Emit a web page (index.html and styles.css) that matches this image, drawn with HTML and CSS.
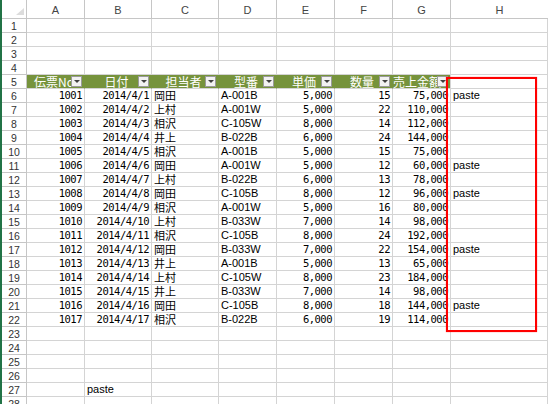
FILE: index.html
```html
<!DOCTYPE html>
<html lang="ja">
<head>
<meta charset="utf-8">
<link rel="stylesheet" href="styles.css">
</head>
<body>
<div class="sheet">
  <div class="row hdr">
    <div class="c corner"><svg width="8" height="7" viewBox="0 0 8 7"><polygon points="8,0 8,7 0,7" fill="#dcdcdc"/></svg></div>
    <div class="c col">A</div><div class="c col">B</div><div class="c col">C</div><div class="c col">D</div>
    <div class="c col">E</div><div class="c col">F</div><div class="c col">G</div><div class="c col">H</div>
  </div>
  <div class="row"><div class="c rh">1</div><div class="c"></div><div class="c"></div><div class="c"></div><div class="c"></div><div class="c"></div><div class="c"></div><div class="c"></div><div class="c"></div></div>
  <div class="row"><div class="c rh">2</div><div class="c"></div><div class="c"></div><div class="c"></div><div class="c"></div><div class="c"></div><div class="c"></div><div class="c"></div><div class="c"></div></div>
  <div class="row"><div class="c rh">3</div><div class="c"></div><div class="c"></div><div class="c"></div><div class="c"></div><div class="c"></div><div class="c"></div><div class="c"></div><div class="c"></div></div>
  <div class="row"><div class="c rh">4</div><div class="c"></div><div class="c"></div><div class="c"></div><div class="c"></div><div class="c"></div><div class="c"></div><div class="c"></div><div class="c"></div></div>
  <div class="row">
    <div class="c rh">5</div>
    <div class="c th">伝票No<span class="fb"></span></div>
    <div class="c th">日付<span class="fb"></span></div>
    <div class="c th">担当者<span class="fb"></span></div>
    <div class="c th">型番<span class="fb"></span></div>
    <div class="c th">単価<span class="fb"></span></div>
    <div class="c th">数量<span class="fb"></span></div>
    <div class="c th th-last">売上金額<span class="fb"></span></div>
    <div class="c"></div>
  </div>
  <div class="row"><div class="c rh">6</div><div class="c n">1001</div><div class="c n">2014/4/1</div><div class="c j">岡田</div><div class="c t">A-001B</div><div class="c n">5,000</div><div class="c n">15</div><div class="c n">75,000</div><div class="c t">paste</div></div>
  <div class="row"><div class="c rh">7</div><div class="c n">1002</div><div class="c n">2014/4/2</div><div class="c j">上村</div><div class="c t">A-001W</div><div class="c n">5,000</div><div class="c n">22</div><div class="c n">110,000</div><div class="c"></div></div>
  <div class="row"><div class="c rh">8</div><div class="c n">1003</div><div class="c n">2014/4/3</div><div class="c j">相沢</div><div class="c t">C-105W</div><div class="c n">8,000</div><div class="c n">14</div><div class="c n">112,000</div><div class="c"></div></div>
  <div class="row"><div class="c rh">9</div><div class="c n">1004</div><div class="c n">2014/4/4</div><div class="c j">井上</div><div class="c t">B-022B</div><div class="c n">6,000</div><div class="c n">24</div><div class="c n">144,000</div><div class="c"></div></div>
  <div class="row"><div class="c rh">10</div><div class="c n">1005</div><div class="c n">2014/4/5</div><div class="c j">相沢</div><div class="c t">A-001B</div><div class="c n">5,000</div><div class="c n">15</div><div class="c n">75,000</div><div class="c"></div></div>
  <div class="row"><div class="c rh">11</div><div class="c n">1006</div><div class="c n">2014/4/6</div><div class="c j">岡田</div><div class="c t">A-001W</div><div class="c n">5,000</div><div class="c n">12</div><div class="c n">60,000</div><div class="c t">paste</div></div>
  <div class="row"><div class="c rh">12</div><div class="c n">1007</div><div class="c n">2014/4/7</div><div class="c j">上村</div><div class="c t">B-022B</div><div class="c n">6,000</div><div class="c n">13</div><div class="c n">78,000</div><div class="c"></div></div>
  <div class="row"><div class="c rh">13</div><div class="c n">1008</div><div class="c n">2014/4/8</div><div class="c j">岡田</div><div class="c t">C-105B</div><div class="c n">8,000</div><div class="c n">12</div><div class="c n">96,000</div><div class="c t">paste</div></div>
  <div class="row"><div class="c rh">14</div><div class="c n">1009</div><div class="c n">2014/4/9</div><div class="c j">相沢</div><div class="c t">A-001W</div><div class="c n">5,000</div><div class="c n">16</div><div class="c n">80,000</div><div class="c"></div></div>
  <div class="row"><div class="c rh">15</div><div class="c n">1010</div><div class="c n">2014/4/10</div><div class="c j">上村</div><div class="c t">B-033W</div><div class="c n">7,000</div><div class="c n">14</div><div class="c n">98,000</div><div class="c"></div></div>
  <div class="row"><div class="c rh">16</div><div class="c n">1011</div><div class="c n">2014/4/11</div><div class="c j">相沢</div><div class="c t">C-105B</div><div class="c n">8,000</div><div class="c n">24</div><div class="c n">192,000</div><div class="c"></div></div>
  <div class="row"><div class="c rh">17</div><div class="c n">1012</div><div class="c n">2014/4/12</div><div class="c j">岡田</div><div class="c t">B-033W</div><div class="c n">7,000</div><div class="c n">22</div><div class="c n">154,000</div><div class="c t">paste</div></div>
  <div class="row"><div class="c rh">18</div><div class="c n">1013</div><div class="c n">2014/4/13</div><div class="c j">井上</div><div class="c t">A-001B</div><div class="c n">5,000</div><div class="c n">13</div><div class="c n">65,000</div><div class="c"></div></div>
  <div class="row"><div class="c rh">19</div><div class="c n">1014</div><div class="c n">2014/4/14</div><div class="c j">上村</div><div class="c t">C-105W</div><div class="c n">8,000</div><div class="c n">23</div><div class="c n">184,000</div><div class="c"></div></div>
  <div class="row"><div class="c rh">20</div><div class="c n">1015</div><div class="c n">2014/4/15</div><div class="c j">井上</div><div class="c t">B-033W</div><div class="c n">7,000</div><div class="c n">14</div><div class="c n">98,000</div><div class="c"></div></div>
  <div class="row"><div class="c rh">21</div><div class="c n">1016</div><div class="c n">2014/4/16</div><div class="c j">岡田</div><div class="c t">C-105B</div><div class="c n">8,000</div><div class="c n">18</div><div class="c n">144,000</div><div class="c t">paste</div></div>
  <div class="row"><div class="c rh">22</div><div class="c n">1017</div><div class="c n">2014/4/17</div><div class="c j">相沢</div><div class="c t">B-022B</div><div class="c n">6,000</div><div class="c n">19</div><div class="c n">114,000</div><div class="c"></div></div>
  <div class="row"><div class="c rh">23</div><div class="c"></div><div class="c"></div><div class="c"></div><div class="c"></div><div class="c"></div><div class="c"></div><div class="c"></div><div class="c"></div></div>
  <div class="row"><div class="c rh">24</div><div class="c"></div><div class="c"></div><div class="c"></div><div class="c"></div><div class="c"></div><div class="c"></div><div class="c"></div><div class="c"></div></div>
  <div class="row"><div class="c rh">25</div><div class="c"></div><div class="c"></div><div class="c"></div><div class="c"></div><div class="c"></div><div class="c"></div><div class="c"></div><div class="c"></div></div>
  <div class="row"><div class="c rh">26</div><div class="c"></div><div class="c"></div><div class="c"></div><div class="c"></div><div class="c"></div><div class="c"></div><div class="c"></div><div class="c"></div></div>
  <div class="row"><div class="c rh">27</div><div class="c"></div><div class="c t">paste</div><div class="c"></div><div class="c"></div><div class="c"></div><div class="c"></div><div class="c"></div><div class="c"></div></div>
  <div class="row"><div class="c rh">28</div><div class="c"></div><div class="c"></div><div class="c"></div><div class="c"></div><div class="c"></div><div class="c"></div><div class="c"></div><div class="c"></div></div>
</div>
<div class="sel"></div>
</body>
</html>
```

FILE: styles.css
```css
html, body {
  margin: 0;
  padding: 0;
  background: #fff;
  overflow: hidden;
}
body {
  position: relative;
  width: 548px;
  height: 404px;
  font-family: "Liberation Sans", Arial, sans-serif;
  font-size: 11px;
  color: #000;
}
.sheet {
  border-left: 2px solid #217346;
  height: 404px;
  overflow: hidden;
}
.row {
  display: grid;
  grid-template-columns: 25px 58px 67px 67px 58px 58px 58px 58px 1fr;
  height: 14px;
}
.row.hdr {
  height: 19px;
}
.c {
  box-sizing: border-box;
  border-right: 1px solid #d4d4d4;
  border-bottom: 1px solid #d4d4d4;
  padding: 0 2px;
  line-height: 13px;
  white-space: nowrap;
  overflow: hidden;
  position: relative;
}
.corner {
  display: flex;
  justify-content: flex-end;
  align-items: flex-end;
  padding: 0 2px 3px 0;
  border-color: #c6c6c6;
}
.col {
  text-align: center;
  color: #444;
  line-height: 16px;
  padding-top: 2px;
  border-color: #c6c6c6;
}
.col:last-child {
  border-right: none;
}
.rh {
  text-align: center;
  color: #333;
  padding-top: 1px;
  font-size: 10.5px;
  border-color: #c6c6c6;
}
.n {
  text-align: right;
  font-family: "DejaVu Sans Mono", monospace;
  font-size: 10.5px;
  letter-spacing: -0.5px;
}
.t {
  font-family: "Liberation Sans", Arial, sans-serif;
}
.j {
  font-family: "Noto Sans CJK JP", sans-serif;
}
.th {
  background: #76933c;
  border-right-color: #76933c;
  color: #fff;
  font-family: "Noto Sans CJK JP", sans-serif;
  font-size: 12px;
  text-align: center;
  padding: 0 3px 0 0;
}
.th-last {
  text-align: left;
  padding: 0;
  border-right-color: #d4d4d4;
}
.fb {
  position: absolute;
  right: 2px;
  top: 1px;
  width: 11px;
  height: 11px;
  box-sizing: border-box;
  background: #f2f2f2;
  border: 1px solid #9a9a9a;
}
.fb::after {
  content: "";
  position: absolute;
  left: 2px;
  top: 3px;
  border-left: 3px solid transparent;
  border-right: 3px solid transparent;
  border-top: 3px solid #404040;
}
.sel {
  position: absolute;
  left: 446px;
  top: 77px;
  width: 91px;
  height: 255px;
  box-sizing: border-box;
  border: 2px solid #ff0000;
  box-shadow: 0 0 1px rgba(255, 0, 0, 0.6);
}
```
